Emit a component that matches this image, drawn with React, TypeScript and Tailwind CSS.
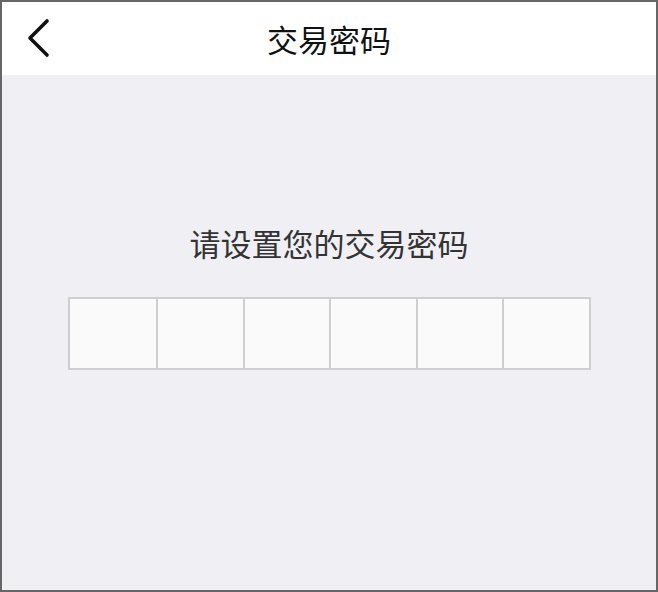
const App = () => {
  const cells = [0, 1, 2, 3, 4, 5]
  return (
    <div
      className="w-[658px] h-[592px] border-2 border-[#666] bg-[#f0eff4] flex flex-col"
      style={{ fontFamily: '"Noto Sans CJK SC", "Noto Sans", sans-serif' }}
    >
      <div className="h-[73px] bg-white flex items-center relative">
        <button className="absolute left-[20px] top-[14px] w-[36px] h-[44px] flex items-center justify-center">
          <svg width="36" height="44" viewBox="0 0 36 44" fill="none">
            <polyline points="25,5 8,22 25,39" stroke="#111" strokeWidth="3.6" strokeLinecap="round" strokeLinejoin="round" />
          </svg>
        </button>
        <div className="flex-1 text-center text-[31px] leading-none text-[#111]">交易密码</div>
      </div>
      <div className="flex flex-col items-center pt-[152px]">
        <div className="text-[31px] leading-none text-[#333]">请设置您的交易密码</div>
        <div className="mt-[39px] flex border-2 border-[#cfcfd1] bg-[#fafafa]">
          {cells.map((i) => (
            <div key={i} className={`w-[86.5px] h-[69px] ${i > 0 ? 'border-l-2 border-[#cfcfd1]' : ''}`} />
          ))}
        </div>
      </div>
    </div>
  )
}

export default App
